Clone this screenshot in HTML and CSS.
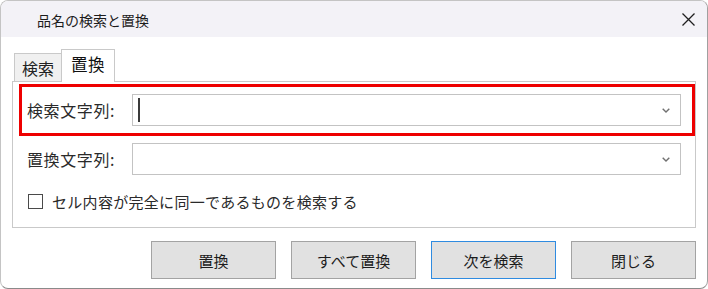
FILE: index.html
```html
<!DOCTYPE html>
<html lang="ja">
<head>
  <meta charset="UTF-8">
  <title>品名の検索と置換</title>
  <link rel="stylesheet" href="styles.css">
</head>
<body>

  <div class="window">
    <!-- タイトルバー -->
    <div class="titlebar">
      <span class="title">品名の検索と置換</span>
      <svg class="close" width="13" height="13" viewBox="0 0 13 13">
        <path d="M0.5 0.5 L12.5 12.5 M12.5 0.5 L0.5 12.5" stroke="#1f1f1f" stroke-width="1.3" fill="none"/>
      </svg>
    </div>

    <div class="content">
      <div class="tabs">
        <div class="tab">検索</div>
        <div class="tab active">置換</div>
      </div>

      <div class="panel">
        <div class="row marked">
          <label class="label">検索文字列:</label>
          <div class="combo">
            <span class="caret"></span>
            <svg class="chevron" width="8" height="5" viewBox="0 0 8 5">
              <path d="M0.7 0.7 L4 4 L7.3 0.7" stroke="#707070" stroke-width="1.4" fill="none"/>
            </svg>
          </div>
        </div>

        <div class="row plain">
          <label class="label">置換文字列:</label>
          <div class="combo">
            <svg class="chevron" width="8" height="5" viewBox="0 0 8 5">
              <path d="M0.7 0.7 L4 4 L7.3 0.7" stroke="#707070" stroke-width="1.4" fill="none"/>
            </svg>
          </div>
        </div>

        <div class="check-row">
          <span class="checkbox"></span>
          <span class="check-text">セル内容が完全に同一であるものを検索する</span>
        </div>
      </div>

      <div class="buttons">
        <button class="btn">置換</button>
        <button class="btn">すべて置換</button>
        <button class="btn focused">次を検索</button>
        <button class="btn">閉じる</button>
      </div>
    </div>
  </div>

</body>
</html>
```

FILE: styles.css
```css
body {
  margin: 0;
  background: #ffffff;
  font-family: "Noto Sans CJK JP", "Noto Sans", sans-serif;
  color: #1c1c1c;
}

.window {
  width: 708px;
  height: 289px;
  box-sizing: border-box;
  border: 1px solid #c4c4c4;
  border-bottom-color: #8a8a8a;
  border-right-color: #a0a0a0;
  border-radius: 8px;
  overflow: hidden;
  background: #ffffff;
}

.titlebar {
  height: 36px;
  background: #f3f2f7;
  display: flex;
  align-items: center;
  justify-content: space-between;
  padding: 0 12px 0 36px;
}

.title {
  font-size: 14px;
  line-height: 1;
  margin-top: 2px;
}

.close {
  margin-top: 1px;
}

.content {
  padding: 12px 11px 0 11px;
}

/* タブ */
.tabs {
  display: flex;
  align-items: flex-end;
  padding-left: 2px;
  height: 32px;
}

.tab {
  font-size: 16px;
  line-height: 1;
  height: 28px;
  width: 47px;
  box-sizing: border-box;
  display: flex;
  align-items: center;
  justify-content: center;
  background: #f0f0f0;
  border: 1px solid #c9c9c9;
  border-right: none;
  border-bottom: none;
  color: #222;
}

.tab.active {
  background: #ffffff;
  width: 54px;
  height: 33px;
  border-right: 1px solid #c9c9c9;
  margin-bottom: -1px;
  position: relative;
  z-index: 1;
  padding-bottom: 3px;
  font-size: 16.5px;
  letter-spacing: 0.5px;
  color: #111;
}

/* パネル */
.panel {
  border: 1px solid #c9c9c9;
  height: 147px;
  box-sizing: border-box;
}

.row {
  display: flex;
  align-items: center;
}

.row.marked {
  margin: 2px 0 0 6px;
  height: 52px;
  box-sizing: border-box;
  border: 3px solid #ee0000;
  padding: 0 11px 0 5px;
}

.row.plain {
  margin-top: 7px;
  padding: 0 14px 0 14px;
}

.label {
  width: 105px;
  flex-shrink: 0;
  font-size: 16px;
  letter-spacing: 0.6px;
  line-height: 1;
  color: #2a2a2a;
}

.combo {
  flex: 1;
  height: 32px;
  box-sizing: border-box;
  border: 1px solid #c3c3c3;
  display: flex;
  align-items: center;
  justify-content: space-between;
  padding: 0 10px 0 5px;
}

.caret {
  width: 2px;
  height: 24px;
  background: #3a3a3a;
}

.chevron {
  margin-left: auto;
}

.check-row {
  display: flex;
  align-items: center;
  margin-top: 16px;
  padding-left: 15px;
  height: 20px;
}

.checkbox {
  width: 15px;
  height: 15px;
  box-sizing: border-box;
  border: 1px solid #4a4a4a;
  margin-right: 9px;
}

.check-text {
  font-size: 15px;
  line-height: 1;
  letter-spacing: 0.3px;
  color: #2a2a2a;
}

/* ボタン */
.buttons {
  display: flex;
  justify-content: flex-end;
  gap: 15px;
  margin-top: 13px;
}

.btn {
  width: 125px;
  height: 38px;
  background: #e1e1e1;
  border: 1px solid #a3a3a3;
  font-family: "Noto Sans CJK JP", "Noto Sans", sans-serif;
  font-size: 15px;
  color: #1c1c1c;
  padding: 0;
}

.btn.focused {
  border-color: #2f8be0;
}
```
